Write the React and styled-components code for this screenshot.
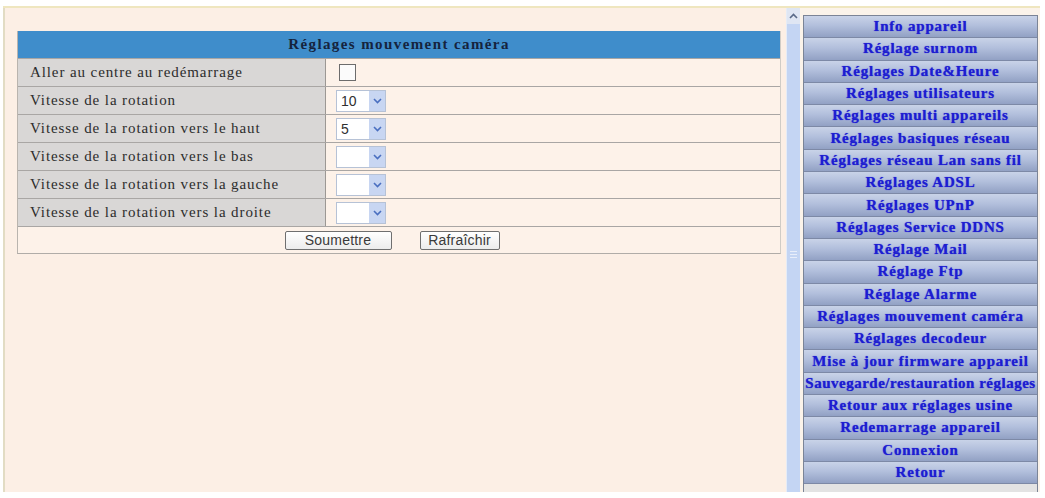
import React from "react";
import styled, { createGlobalStyle } from "styled-components";

const Global = createGlobalStyle`
  html, body { margin: 0; padding: 0; background: #ffffff; }
  body { font-family: "Liberation Serif", "Times New Roman", serif; }
`;

const Frame = styled.div`
  display: flex;
  margin: 6px 0 0 3px;
  width: 1037px;
  height: 486px;
  border-top: 2px solid #efe6bf;
  box-sizing: border-box;
`;

const ContentFrame = styled.div`
  display: flex;
  width: 797px;
  height: 484px;
  border-left: 2px solid #e2dcc4;
  box-sizing: border-box;
  background: #fcefe5;
`;

const Main = styled.div`
  flex: 1;
  padding: 23px 5px 0 12px;
`;

const Table = styled.div`
  width: 762px;
  border-left: 1px solid #b9b4ae;
  border-right: 1px solid #d0ccc6;
  border-bottom: 1px solid #b0aca8;
`;

const Header = styled.div`
  height: 27px;
  background: #3f8dcb;
  display: flex;
  align-items: center;
  justify-content: center;
  font-weight: bold;
  font-size: 15px;
  letter-spacing: 1.4px;
  color: #15233d;
`;

const Row = styled.div`
  display: grid;
  grid-template-columns: 308px 1fr;
  height: 28px;
  border-top: 1px solid #a9a6a4;
  box-sizing: border-box;
`;

const Label = styled.div`
  background: #d9d7d6;
  border-right: 1px solid #9c9894;
  display: flex;
  align-items: center;
  padding-left: 12px;
  font-size: 15px;
  letter-spacing: 0.9px;
  color: #2c2c2c;
`;

const Value = styled.div`
  display: flex;
  align-items: center;
  padding-left: 10px;
  background: #fdf2e9;
`;

const Check = styled.div`
  width: 15px;
  height: 15px;
  margin-left: 3px;
  border: 1px solid #6c6c6c;
  background: #fbfbfb;
`;

const Select = styled.div`
  display: flex;
  width: 50px;
  height: 22px;
  border: 1px solid #b6c2d6;
  box-sizing: border-box;
  background: #ffffff;
`;

const SelectText = styled.div`
  flex: 1;
  display: flex;
  align-items: center;
  padding-left: 4px;
  font-family: "Liberation Sans", Arial, sans-serif;
  font-size: 14px;
  color: #303030;
`;

const SelectBtn = styled.div`
  width: 16px;
  background: #c8d6f2;
  display: flex;
  align-items: center;
  justify-content: center;
`;

const ButtonRow = styled.div`
  height: 27px;
  border-top: 1px solid #a9a6a4;
  background: #fdf2e9;
  display: flex;
  align-items: center;
  justify-content: center;
  gap: 28px;
  padding-right: 14px;
  box-sizing: border-box;
`;

const Button = styled.button`
  height: 19px;
  width: ${(p) => p.$w}px;
  padding: 0;
  border: 1px solid #6f6f6f;
  border-radius: 2px;
  background: linear-gradient(#ffffff, #ececec);
  font-family: "Liberation Sans", Arial, sans-serif;
  font-size: 14px;
  color: #3a3a3a;
  letter-spacing: 0.2px;
`;

const Scrollbar = styled.div`
  width: 15px;
  display: flex;
  flex-direction: column;
  background: #c4d5f3;
  border-left: 1px solid #e6ecf6;
`;

const ScrollUp = styled.div`
  height: 16px;
  background: #dfe6f3;
  display: flex;
  align-items: center;
  justify-content: center;
`;

const ScrollTrack = styled.div`
  flex: 1;
  display: flex;
  align-items: center;
  justify-content: center;
  padding-bottom: 8px;
`;

const Grip = styled.div`
  width: 7px;
  height: 5px;
  border-top: 1px solid #e8eefa;
  border-bottom: 1px solid #e8eefa;
  position: relative;
  &::after {
    content: "";
    position: absolute;
    left: 0;
    right: 0;
    top: 2px;
    border-top: 1px solid #e8eefa;
  }
`;

const Side = styled.div`
  width: 240px;
  height: 484px;
  background: #fbf3ea;
  display: flex;
  flex-direction: column;
  padding: 7px 2px 0 3px;
  box-sizing: border-box;
`;

const Menu = styled.div`
  display: flex;
  flex-direction: column;
  border: 1px solid #7b8496;
  background: #e3e3e3;
  padding-bottom: 9px;
`;

const Item = styled.div`
  height: 22.3px;
  box-sizing: border-box;
  border-bottom: 1px solid #7d89a6;
  background: linear-gradient(#c9d3e8 0%, #b2bfdc 45%, #92a1c4 100%);
  display: flex;
  align-items: center;
  justify-content: center;
  white-space: nowrap;
  overflow: hidden;
  font-weight: bold;
  font-size: 15px;
  letter-spacing: ${(p) => (p.$tight ? 0.5 : 0.8)}px;
  color: #1d1dd0;
  text-shadow: 0 0 1px #3a3ae0;
`;

const Chevron = () => (
  <svg width="9" height="6" viewBox="0 0 9 6">
    <path d="M1 1 L4.5 4.5 L8 1" fill="none" stroke="#4a6fc0" strokeWidth="1.6" />
  </svg>
);

const UpArrow = () => (
  <svg width="9" height="6" viewBox="0 0 9 6">
    <path d="M1 5 L4.5 1.5 L8 5" fill="none" stroke="#5a6a88" strokeWidth="1.6" />
  </svg>
);

const rows = [
  { label: "Aller au centre au redémarrage", type: "check" },
  { label: "Vitesse de la rotation", type: "select", v: "10" },
  { label: "Vitesse de la rotation vers le haut", type: "select", v: "5" },
  { label: "Vitesse de la rotation vers le bas", type: "select", v: "" },
  { label: "Vitesse de la rotation vers la gauche", type: "select", v: "" },
  { label: "Vitesse de la rotation vers la droite", type: "select", v: "" },
];

const menu = [
  "Info appareil",
  "Réglage surnom",
  "Réglages Date&Heure",
  "Réglages utilisateurs",
  "Réglages multi appareils",
  "Réglages basiques réseau",
  "Réglages réseau Lan sans fil",
  "Réglages ADSL",
  "Réglages UPnP",
  "Réglages Service DDNS",
  "Réglage Mail",
  "Réglage Ftp",
  "Réglage Alarme",
  "Réglages mouvement caméra",
  "Réglages decodeur",
  "Mise à jour firmware appareil",
  "Sauvegarde/restauration réglages",
  "Retour aux réglages usine",
  "Redemarrage appareil",
  "Connexion",
  "Retour",
];

export default function App() {
  return (
    <>
      <Global />
      <Frame>
        <ContentFrame>
          <Main>
            <Table>
              <Header>Réglages mouvement caméra</Header>
              {rows.map((r) => (
                <Row key={r.label}>
                  <Label>{r.label}</Label>
                  <Value>
                    {r.type === "check" ? (
                      <Check />
                    ) : (
                      <Select>
                        <SelectText>{r.v}</SelectText>
                        <SelectBtn>
                          <Chevron />
                        </SelectBtn>
                      </Select>
                    )}
                  </Value>
                </Row>
              ))}
              <ButtonRow>
                <Button $w={107}>Soumettre</Button>
                <Button $w={80}>Rafraîchir</Button>
              </ButtonRow>
            </Table>
          </Main>
          <Scrollbar>
            <ScrollUp>
              <UpArrow />
            </ScrollUp>
            <ScrollTrack>
              <Grip />
            </ScrollTrack>
          </Scrollbar>
        </ContentFrame>
        <Side>
          <Menu>
            {menu.map((m) => (
              <Item key={m} $tight={m.length > 30}>
                {m}
              </Item>
            ))}
          </Menu>
        </Side>
      </Frame>
    </>
  );
}
